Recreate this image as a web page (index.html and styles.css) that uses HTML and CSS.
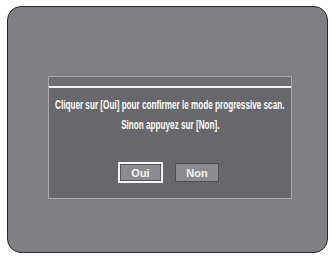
FILE: index.html
```html
<!DOCTYPE html>
<html>
<head>
<meta charset="utf-8">
<link rel="stylesheet" href="styles.css">
</head>
<body>
<div class="screen">
  <div class="dialog">
    <div class="dialog-head"></div>
    <div class="dialog-rule"></div>
    <div class="dialog-body">
      <p class="msg">Cliquer sur [Oui] pour confirmer le mode progressive scan.</p>
      <p class="msg">Sinon appuyez sur [Non].</p>
      <div class="buttons">
        <div class="btn btn-active"><span>Oui</span></div>
        <div class="btn">Non</div>
      </div>
    </div>
  </div>
</div>
</body>
</html>
```
FILE: styles.css
```css
html, body {
  margin: 0;
  padding: 0;
  background: #ffffff;
}
body {
  padding: 6px 0 0 7px;
  font-family: "Liberation Sans", Arial, sans-serif;
}
.screen {
  box-sizing: border-box;
  width: 321px;
  height: 247px;
  border: 1px solid #2a2a2a;
  border-radius: 14px;
  background: #808084;
  padding: 69px 0 0 40px;
}
.dialog {
  box-sizing: border-box;
  width: 244px;
  height: 123px;
  border: 1px solid #a9a9ab;
  background: #68686c;
  display: flex;
  flex-direction: column;
}
.dialog-head {
  height: 9px;
  background: #6f6f73;
}
.dialog-rule {
  height: 2px;
  background: #f2f2f2;
}
.dialog-body {
  display: flex;
  flex-direction: column;
  align-items: center;
  padding-top: 10px;
}
.msg {
  margin: 0;
  height: 20px;
  line-height: 14px;
  color: #ffffff;
  font-size: 12px;
  font-weight: bold;
  white-space: nowrap;
  transform: scaleX(0.68);
}
.buttons {
  display: flex;
  gap: 12px;
  margin-top: 24px;
  margin-left: -3px;
}
.btn {
  box-sizing: border-box;
  width: 44px;
  height: 19px;
  background: #8c8c90;
  border: 1px solid #4e4e52;
  color: #f4f4f4;
  font-size: 11px;
  font-weight: bold;
  display: flex;
  align-items: center;
  justify-content: center;
  margin-top: 1px;
}
.btn-active {
  width: 45px;
  height: 21px;
  margin-top: 0;
  border: 2px solid #f4f4f4;
  box-shadow: inset 0 0 0 1px #58585c;
}
```
